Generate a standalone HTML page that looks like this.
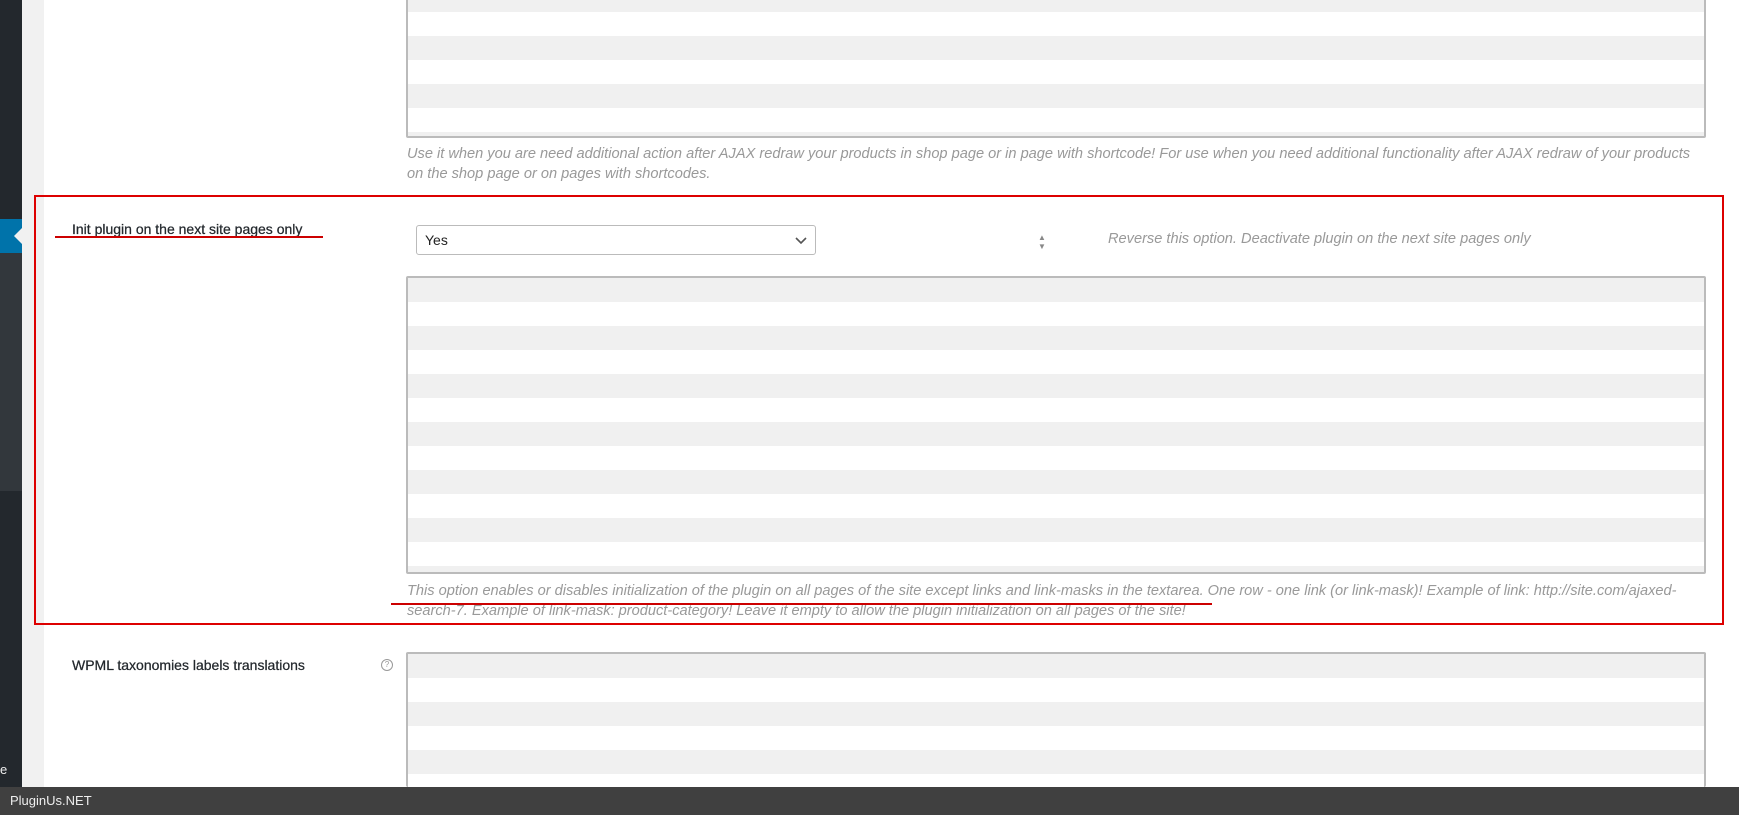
<!DOCTYPE html>
<html style="overflow:hidden;height:815px"><head><meta charset="utf-8"><style>
body{margin:0;width:1739px;height:815px;overflow:hidden;background:#fff;position:relative;font-family:"Liberation Sans",sans-serif}
.a{position:absolute}
.ta{position:absolute;box-sizing:border-box;border:2px solid #bbb;border-radius:2px;background:repeating-linear-gradient(to bottom,#f0f0f0 0,#f0f0f0 24px,#fff 24px,#fff 48px)}
.d{position:absolute;font-style:italic;color:#999;font-size:14.6px;line-height:20px}
.lbl{position:absolute;font-size:14px;color:#23282d;font-weight:normal;-webkit-text-stroke:0.25px #23282d}
</style></head><body>
<div class="a" style="left:0;top:0;width:22px;height:787px;background:#23282d"></div>
<div class="a" style="left:0;top:219px;width:22px;height:34px;background:#0073aa"></div>
<div class="a" style="left:14px;top:228px;width:0;height:0;border-top:8px solid transparent;border-bottom:8px solid transparent;border-right:8px solid #f1f1f1"></div>
<div class="a" style="left:0;top:253px;width:22px;height:238px;background:#32373c"></div>
<div class="a" style="left:0;top:762px;color:#eee;font-size:13px">e</div>
<div class="a" style="left:22px;top:0;width:22px;height:787px;background:#f1f1f1"></div>

<div class="ta" style="left:406px;top:-14px;width:1300px;height:152px"></div>
<div class="d" style="left:407px;top:144px;width:1300px">Use it when you are need additional action after AJAX redraw your products in shop page or in page with shortcode! For use when you need additional functionality after AJAX redraw of your products on the shop page or on pages with shortcodes.</div>

<div class="a" style="left:34px;top:195px;width:1690px;height:430px;border:2px solid #d00;box-sizing:border-box"></div>
<div class="lbl" style="left:72px;top:221px">Init plugin on the next site pages only</div>
<div class="a" style="left:55px;top:236px;width:268px;height:2px;background:#c00"></div>
<div class="a" style="left:416px;top:225px;width:400px;height:30px;box-sizing:border-box;border:1px solid #bbb;border-radius:3px;font-size:14px;color:#222;padding:6px 8px">Yes
<svg class="a" style="right:8px;top:11px" width="12" height="8" viewBox="0 0 12 8"><path d="M1 1l5 5 5-5" fill="none" stroke="#555" stroke-width="1.6"/></svg></div>
<div class="a" style="left:1038px;top:233px;font-size:8px;color:#888;line-height:9px">▲<br>▼</div>
<div class="d" style="left:1108px;top:229px">Reverse this option. Deactivate plugin on the next site pages only</div>
<div class="ta" style="left:406px;top:276px;width:1300px;height:298px"></div>
<div class="d" style="left:407px;top:581px;width:1300px">This option enables or disables initialization of the plugin on all pages of the site except links and link-masks in the textarea. One row - one link (or link-mask)! Example of link: http://site.com/ajaxed-search-7. Example of link-mask: product-category! Leave it empty to allow the plugin initialization on all pages of the site!</div>
<div class="a" style="left:391px;top:603px;width:821px;height:2px;background:#c00"></div>

<div class="lbl" style="left:72px;top:657px">WPML taxonomies labels translations</div>
<div class="a" style="left:381px;top:659px;width:10px;height:10px;border:1px solid #999;border-radius:50%;font-size:8px;color:#999;text-align:center;line-height:10px">?</div>
<div class="ta" style="left:406px;top:652px;width:1300px;height:135px;border-bottom:none"></div>

<div class="a" style="left:0;top:787px;width:1739px;height:28px;background:#404040;color:#eee;font-size:13px;line-height:28px;padding-left:10px;box-sizing:border-box;z-index:5">PluginUs.NET</div>
</body></html>
